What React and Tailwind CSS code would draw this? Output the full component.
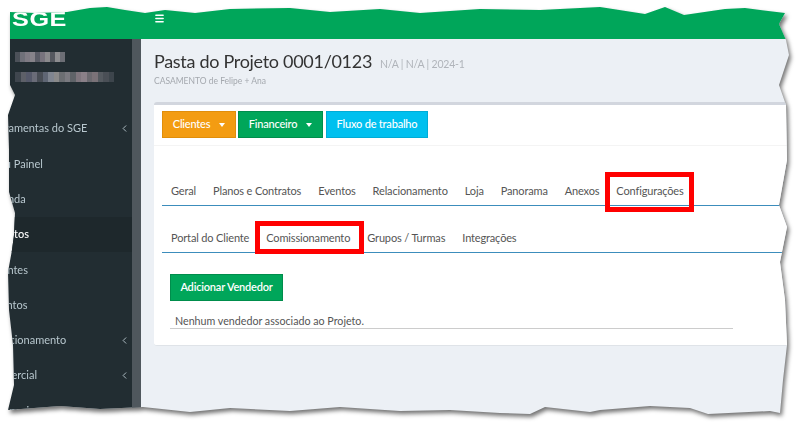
import React from 'react';
import { ChevronLeft, Menu } from 'lucide-react';

// torn paper outline of the screenshot
const tornEdge =
  '[clip-path:polygon(10px_12px,35px_13px,67px_12px,90px_8px,107px_7px,125px_10px,145px_13px,165px_10px,195px_13px,230px_9px,290px_8px,330px_12px,380px_9px,420px_13px,480px_9px,540px_10px,600px_7px,645px_14px,665px_7px,684px_15px,725px_9px,745px_8px,785px_13px,779px_24px,786px_40px,789px_55px,779px_85px,786px_105px,787px_160px,779px_205px,787px_227px,780px_262px,785px_300px,787px_345px,783px_380px,780px_413px,770px_411px,708px_414px,690px_408px,650px_406px,600px_410px,590px_412px,545px_407px,530px_414px,500px_413px,450px_410px,400px_411px,340px_407px,290px_411px,230px_408px,190px_412px,143px_407px,100px_409px,60px_406px,8px_410px,14px_385px,13px_345px,9px_310px,8px_272px,12px_250px,14px_235px,15px_213px,9px_192px,9px_150px,8px_115px,15px_95px,10px_85px)]';

const topTabs = ['Geral', 'Planos e Contratos', 'Eventos', 'Relacionamento', 'Loja', 'Panorama', 'Anexos'];
const subTabs = ['Portal do Cliente', 'Comissionamento', 'Grupos / Turmas', 'Integrações'];

const menu = [
  { label: 'Ferramentas do SGE', arrow: true },
  { label: 'Meu Painel' },
  { label: 'Agenda' },
  { label: 'Projetos', active: true },
  { label: 'Clientes' },
  { label: 'Eventos' },
  { label: 'Relacionamento', arrow: true },
  { label: 'Comercial', arrow: true },
  { label: 'Financeiro', arrow: true },
];

const blurTop = ['bg-[#4c5159]', 'bg-[#6f7079]', 'bg-[#7f7b84]', 'bg-[#86838a]', 'bg-[#5a5c66]', 'bg-[#77737d]', 'bg-[#8b8a8d]', 'bg-[#55585f]', 'bg-[#8d8d90]', 'bg-[#6c6e75]'];
const blurBottom = ['bg-[#3f464e]', 'bg-[#5d6068]', 'bg-[#55596a]', 'bg-[#6a6c78]', 'bg-[#484d55]', 'bg-[#5f6674]', 'bg-[#7f8590]', 'bg-[#8a8a8a]', 'bg-[#6b6e72]', 'bg-[#7a7a80]', 'bg-[#5f6368]', 'bg-[#7f767e]', 'bg-[#8a8088]', 'bg-[#6c6a70]', 'bg-[#7a7278]', 'bg-[#555a60]', 'bg-[#4a4f56]', 'bg-[#3d454c]'];

const Sidebar = () => (
  <aside className="w-[141px] shrink-0 flex bg-[#222d32] overflow-hidden">
    <div className="w-[132px] shrink-0 flex flex-col">
      <div className="h-[72px] shrink-0 pt-[13px] pl-[15px] flex flex-col">
        <div className="flex h-[10px]">
          {blurTop.map((c, i) => <span key={i} className={`w-[5px] h-full ${c}`} />)}
        </div>
        <div className="flex h-[10px] mt-[10px]">
          {blurBottom.map((c, i) => <span key={i} className={`w-[5.5px] h-full ${c}`} />)}
        </div>
      </div>
      <nav className="flex flex-col">
        {menu.map((item) => (
          <div
            key={item.label}
            className={`h-[35.3px] shrink-0 flex items-center justify-between pr-[2px] text-[11px] ${item.active ? 'bg-[#1e282c] text-white font-medium' : 'text-[#b8c7ce]'}`}
          >
            <span className="-ml-[11px] whitespace-nowrap">{item.label}</span>
            {item.arrow && <ChevronLeft size={11} strokeWidth={2} />}
          </div>
        ))}
      </nav>
    </div>
    <div className="flex-1 bg-[#4f575d]" />
  </aside>
);

const Tab = ({ children }) => (
  <span className="whitespace-nowrap">{children}</span>
);

const Button = ({ className, children, caret }) => (
  <button className={`h-[27px] flex items-center justify-center border font-medium text-white text-[11px] tracking-[-0.2px] ${className}`}>
    {children}
    {caret && <span className="ml-[9px] w-0 h-0 border-x-[3.5px] border-x-transparent border-t-[4px] border-t-white" />}
  </button>
);

export default function App() {
  return (
    <div className="w-[798px] h-[424px] bg-white overflow-hidden font-['Lato','Noto_Sans',sans-serif]">
      <div className="w-full h-full [filter:drop-shadow(2px_3px_2px_rgba(0,0,0,0.55))]">
        <div className={`w-full h-full flex flex-col bg-[#ecf0f5] ${tornEdge}`}>
          <header className="h-[39px] shrink-0 bg-[#00a65a] flex items-end">
            <div className="w-[154px] shrink-0 h-full flex items-end pb-[10px] pl-[12px]">
              <span className="text-white text-[21px] leading-[20px] font-bold tracking-[0.5px] font-['Liberation_Sans',sans-serif] scale-x-[1.2] origin-left">SGE</span>
            </div>
            <div className="h-full pt-[13px]">
              <Menu size={11} strokeWidth={3} className="text-white" />
            </div>
          </header>

          <div className="flex-1 flex min-h-0">
            <Sidebar />
            <main className="flex-1 pl-[13px] min-w-0">
              <div className="h-[63px] pt-[8px]">
                <div className="flex items-baseline">
                  <h1 className="text-[18px] leading-[28px] tracking-[-0.3px] text-[#333]">Pasta do Projeto 0001/0123</h1>
                  <span className="ml-[8px] text-[10.5px] tracking-[-0.2px] text-[#b0b4ba]">N/A | N/A | 2024-1</span>
                </div>
                <p className="text-[8.5px] leading-[12px] text-[#a4a8ae]">CASAMENTO de Felipe + Ana</p>
              </div>

              <section className="relative h-[244px] bg-white border-t-[3px] border-[#d2d6de] border-b border-b-[#dfe3e8] rounded-[3px] pl-[8px]">
                <div className="h-[41px] pt-[6px] flex gap-[2px] border-b border-[#f4f4f4] -ml-[8px] pl-[8px]">
                  <Button caret className="w-[74px] bg-[#f39c12] border-[#e08e0b]">Clientes</Button>
                  <Button caret className="w-[85px] bg-[#00a65a] border-[#008d4c]">Financeiro</Button>
                  <Button className="w-[102px] ml-[1px] bg-[#00c0ef] border-[#00acd6]">Fluxo de trabalho</Button>
                </div>

                <div className="mt-[23px] h-[37px] flex items-center gap-[17px] pl-[9px] pt-[8px] border-b border-[#3c8dbc] text-[11px] tracking-[-0.15px] text-[#555]">
                  {topTabs.map((t) => <Tab key={t}>{t}</Tab>)}
                  <span className="whitespace-nowrap text-[#555]">Configurações</span>
                </div>

                <div className="mt-[10px] h-[37px] flex items-center gap-[17px] pl-[9px] pt-[8px] border-b border-[#3c8dbc] text-[11px] tracking-[-0.15px] text-[#555]">
                  {subTabs.map((t) => <Tab key={t}>{t}</Tab>)}
                </div>

                <div className="pl-[8px] pr-[65px] pt-[20px]">
                  <button className="w-[113px] h-[27px] bg-[#00a65a] border border-[#008d4c] text-white text-[11px] tracking-[-0.2px] font-semibold">Adicionar Vendedor</button>
                  <p className="mt-[11px] h-[17px] pl-[5px] border-b border-[#ccc] text-[10.7px] leading-[17px] text-[#555]">Nenhum vendedor associado ao Projeto.</p>
                </div>

                {/* callouts drawn over the screenshot */}
                <div className="absolute left-[451px] top-[67px] w-[89px] h-[40px] border-[5px] border-[#ff0000]" />
                <div className="absolute left-[101px] top-[116px] w-[109px] h-[33px] border-[5px] border-[#ff0000]" />
              </section>
            </main>
          </div>
        </div>
      </div>
    </div>
  );
}
